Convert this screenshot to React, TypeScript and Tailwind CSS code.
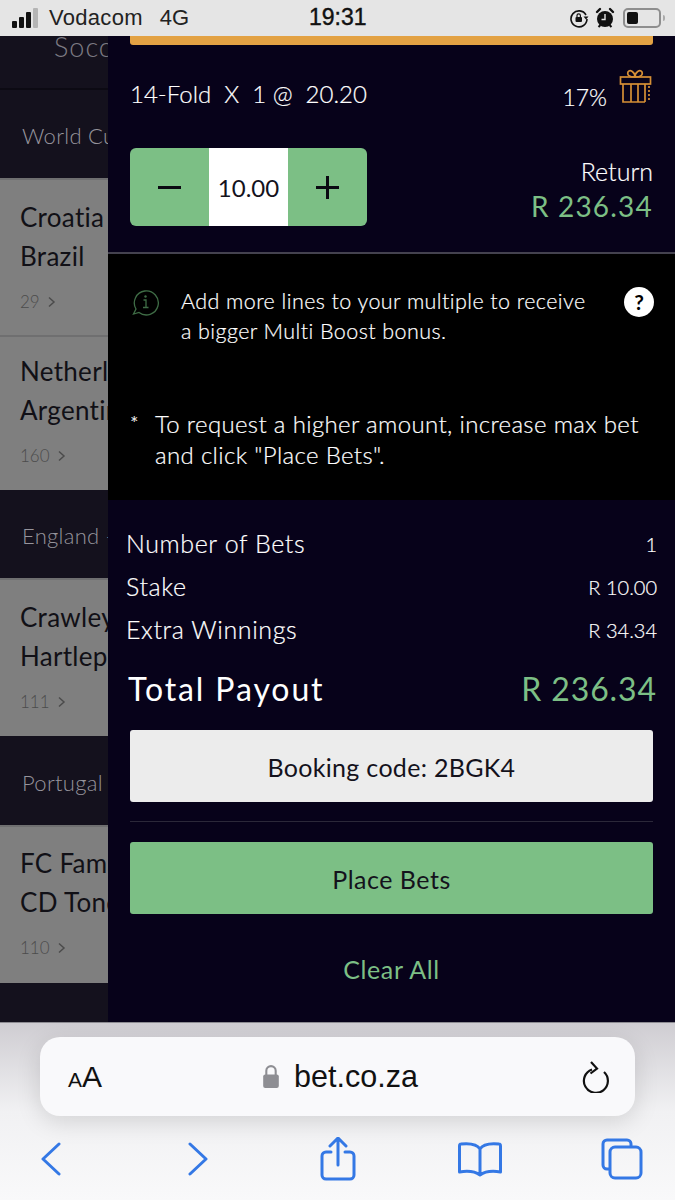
import React from "react";

const font = { fontFamily: '"Lato", "Noto Sans", sans-serif' };

function SignalBars() {
  return (
    <div className="flex items-end gap-[2px] h-[20px] w-[30px]">
      <div className="w-[5px] h-[7px] bg-[#111] rounded-[1px]"></div>
      <div className="w-[5px] h-[11px] bg-[#111] rounded-[1px]"></div>
      <div className="w-[5px] h-[16px] bg-[#111] rounded-[1px]"></div>
      <div className="w-[5px] h-[20px] bg-[#b5b5b5] rounded-[1px]"></div>
    </div>
  );
}

function StatusBar() {
  return (
    <div className="relative h-[36px] bg-[#e5e5e5] flex items-center pl-[12px] pr-[10px] shrink-0 font-['Liberation_Sans']">
      <SignalBars />
      <span className="ml-[7px] text-[22px] leading-[26px] text-[#222] tracking-[0.3px]">Vodacom</span>
      <span className="ml-[17px] text-[22px] leading-[26px] text-[#222]">4G</span>
      <span className="absolute left-[309px] top-[4px] text-[23px] leading-[26px] text-[#111] [-webkit-text-stroke:0.4px_#111]">19:31</span>
      <div className="ml-auto flex items-center">
        <svg width="20" height="20" viewBox="0 0 20 20" className="mr-[6px]">
          <path d="M17 7A8 8 0 1 0 18 11" fill="none" stroke="#111" strokeWidth="1.6" />
          <path d="M14.5 8.5h5l-2.5 3z" fill="#111" />
          <rect x="6.5" y="9" width="6.5" height="5" rx="1" fill="#111" />
          <path d="M8 9V7.5a1.7 1.7 0 0 1 3.4 0V9" fill="none" stroke="#111" strokeWidth="1.2" />
        </svg>
        <svg width="20" height="22" viewBox="0 0 20 22" className="mr-[8px]">
          <circle cx="10" cy="12" r="8" fill="#111" />
          <path d="M2 5l3-3M18 5l-3-3" stroke="#111" strokeWidth="2.4" strokeLinecap="round" />
          <path d="M3.5 20l2-2M16.5 20l-2-2" stroke="#111" strokeWidth="2" />
          <path d="M10 7v5.5H6.5" fill="none" stroke="#e5e5e5" strokeWidth="1.4" />
        </svg>
        <div className="w-[38px] h-[20px] rounded-[5px] border-2 border-[#8e8e8e] p-[2px] flex">
          <div className="w-[11px] h-full bg-[#111] rounded-[2px]"></div>
        </div>
        <div className="w-[2px] h-[6px] bg-[#aaa] ml-[2px] rounded-r-sm"></div>
      </div>
    </div>
  );
}

function SideHeader({ label, h }: { label: string; h: string }) {
  return (
    <div className={`${h} shrink-0 bg-[#14111d] flex items-center pl-[22px] pt-[3px] overflow-hidden`}>
      <span className="text-[22px] font-light text-[#96949c] whitespace-nowrap tracking-[0.3px]">{label}</span>
    </div>
  );
}

function SideMatch({ a, b, n, cls }: { a: string; b: string; n: string; cls: string }) {
  return (
    <div className={`${cls} shrink-0 bg-[#7f7f7f] pl-[20px] border-t-2 border-[#6f6f70] overflow-hidden`}>
      <div className="text-[26px] leading-[39px] text-[#111016] whitespace-nowrap tracking-[0.3px]">{a}</div>
      <div className="text-[26px] leading-[39px] text-[#111016] whitespace-nowrap tracking-[0.3px]">{b}</div>
      <div className="flex items-center mt-[14px] text-[17px] font-light leading-[24px] text-[#4c4c4c]">
        <span>{n}</span>
        <svg width="10" height="12" viewBox="0 0 10 12" className="ml-[7px]">
          <path d="M2 1.5L7 6l-5 4.5" fill="none" stroke="#4c4c4c" strokeWidth="1.5" />
        </svg>
      </div>
    </div>
  );
}

function Sidebar() {
  return (
    <div className="w-[108px] shrink-0 bg-[#14111d] overflow-hidden flex flex-col" style={font}>
      <div className="h-[54px] shrink-0 flex border-b-2 border-[#0c0a13] pl-[25px]">
        <div className="w-[4px] h-[35px] bg-[#8a6a38] rounded-b-sm"></div>
        <span className="ml-[29px] mt-[-3px] text-[27px] font-light leading-[28px] text-[#7d7b83] tracking-[1px]">Soccer</span>
      </div>
      <SideHeader label="World Cup" h="h-[88px]" />
      <SideMatch a="Croatia" b="Brazil" n="29" cls="h-[157px] pt-[18px]" />
      <SideMatch a="Netherlands" b="Argentina" n="160" cls="h-[155px] pt-[15px]" />
      <SideHeader label="England - League" h="h-[88px]" />
      <SideMatch a="Crawley" b="Hartlepool" n="111" cls="h-[158px] pt-[18px]" />
      <SideHeader label="Portugal" h="h-[89px]" />
      <SideMatch a="FC Famalicão" b="CD Tondela" n="110" cls="h-[158px] pt-[17px]" />
    </div>
  );
}

function GiftIcon() {
  return (
    <svg width="34" height="36" viewBox="0 0 34 36" fill="none" stroke="#d58f36" strokeWidth="1.7">
      <rect x="1.5" y="8" width="30" height="7" />
      <path d="M4 15v18h22M26 15v18" />
      <path d="M12 15v18M19 15v18" />
      <path d="M16 8c-6 0-8-2-7-5 2-3 7 0 7 5zM16 8c6 0 8-2 7-5-2-3-7 0-7 5z" />
      <path d="M30 17v14" strokeDasharray="2 2" />
    </svg>
  );
}

function InfoIcon() {
  return (
    <svg width="30" height="30" viewBox="0 0 30 30" fill="none" stroke="#3f6d46" strokeWidth="1.3">
      <path d="M6 22A12 12 0 1 1 9 25.4L3.5 27z" />
      <circle cx="15.5" cy="9.5" r="1.2" fill="#3f6d46" stroke="none" />
      <path d="M13.5 13h2.5v7M13 20.5h5.5" />
    </svg>
  );
}

function StakeRow() {
  return (
    <div className="flex justify-between">
      <div className="w-[237px] h-[78px] flex rounded-[6px] overflow-hidden bg-[#7cbf85]">
        <div className="w-[79px] flex items-center justify-center">
          <div className="w-[23px] h-[3px] bg-[#0b0a12]"></div>
        </div>
        <div className="w-[79px] bg-white flex items-center justify-center text-[24px] text-[#14121c] pt-[2px]">10.00</div>
        <div className="w-[79px] flex items-center justify-center relative">
          <div className="w-[23px] h-[3px] bg-[#0b0a12]"></div>
          <div className="absolute w-[3px] h-[23px] bg-[#0b0a12]"></div>
        </div>
      </div>
      <div className="text-right">
        <div className="text-[25px] font-light leading-[30px] text-white mt-[8px] [-webkit-text-stroke:0.2px_white]">Return</div>
        <div className="text-[28px] leading-[40px] text-[#7cbf85] tracking-[1.2px]">R 236.34</div>
      </div>
    </div>
  );
}

function SummaryRow({ label, value }: { label: string; value: string }) {
  return (
    <div className="flex items-center justify-between h-[43px]">
      <span className="text-[25px] font-light text-white tracking-[0.6px] [-webkit-text-stroke:0.2px_white]">{label}</span>
      <span className="text-[20px] font-light text-white [-webkit-text-stroke:0.2px_white]">{value}</span>
    </div>
  );
}

function Panel() {
  return (
    <div className="flex-1 min-w-0 bg-[#07021a] flex flex-col" style={font}>
      <div className="h-[218px] shrink-0 px-[22px] border-b-2 border-[#44424f]">
        <div className="h-[9px] bg-[#e3a244] rounded-b-[3px]"></div>
        <div className="flex items-center justify-between h-[103px] pb-[6px]">
          <span className="text-[24px] font-light text-white whitespace-pre [-webkit-text-stroke:0.2px_white]">14-Fold  X  1 @  20.20</span>
          <div className="flex items-center">
            <span className="text-[23px] font-light text-white mt-[8px] [-webkit-text-stroke:0.2px_white]">17%</span>
            <div className="ml-[12px] mb-[14px]"><GiftIcon /></div>
          </div>
        </div>
        <StakeRow />
      </div>

      <div className="h-[246px] shrink-0 bg-black pl-[22px] pr-[21px]">
        <div className="flex items-start pt-[32px]">
          <div className="mt-[1px] shrink-0"><InfoIcon /></div>
          <div className="ml-[21px] flex-1 text-[21.5px] font-light leading-[30px] text-white tracking-[0.42px] [-webkit-text-stroke:0.2px_white]">
            <div>Add more lines to your multiple to receive</div>
            <div>a bigger Multi Boost bonus.</div>
          </div>
          <div className="w-[30px] h-[30px] mt-[1px] rounded-full bg-white text-black flex items-center justify-center text-[21px] font-bold">?</div>
        </div>
        <div className="flex mt-[62px] text-[24px] font-light leading-[31px] text-white tracking-[0.35px] [-webkit-text-stroke:0.2px_white]">
          <span className="w-[25px] shrink-0 text-[20px]">*</span>
          <div>
            <div className="whitespace-nowrap">To request a higher amount, increase max bet</div>
            <div>and click "Place Bets".</div>
          </div>
        </div>
      </div>

      <div className="flex-1 pl-[18px] pr-[18px] pt-[22px]">
        <SummaryRow label="Number of Bets" value="1" />
        <SummaryRow label="Stake" value="R 10.00" />
        <SummaryRow label="Extra Winnings" value="R 34.34" />
        <div className="flex items-center justify-between h-[50px] mt-[13px] pl-[2px]">
          <span className="text-[32px] text-white tracking-[1.9px]">Total Payout</span>
          <span className="text-[32px] text-[#7cbf85] tracking-[0.9px]">R 236.34</span>
        </div>
        <div className="mx-[4px] mt-[16px]">
          <div className="h-[72px] bg-[#ececec] rounded-[3px] flex items-center justify-center pt-[4px] text-[25px] text-[#14121c] tracking-[0.3px]">Booking code: 2BGK4</div>
          <div className="h-px bg-[#2b2839] mt-[19px]"></div>
          <div className="h-[72px] bg-[#7cbf85] rounded-[3px] flex items-center justify-center pt-[4px] text-[25px] text-[#14121c] tracking-[0.5px] mt-[20px]">Place Bets</div>
          <div className="text-center text-[25px] text-[#7cbf85] tracking-[0.6px] mt-[37px]">Clear All</div>
        </div>
      </div>
    </div>
  );
}

function SafariBar() {
  return (
    <div className="h-[178px] shrink-0 bg-gradient-to-b from-[#cfcdd2] via-[#f1f1f3] to-[#f9f9fa] px-[40px] pt-[14px] relative font-['Liberation_Sans'] border-t border-[#8d8c92]">
      <div className="h-[79px] rounded-[20px] bg-[#f9f9fb] shadow-[0_6px_24px_rgba(0,0,0,0.13)] flex items-center pl-[28px] pr-[24px]">
        <span className="text-[#111] leading-none w-[75px] whitespace-nowrap"><span className="text-[21px]">A</span><span className="text-[30px]">A</span></span>
        <div className="flex-1 flex items-center justify-center gap-[14px] pr-[44px]">
          <svg width="18" height="25" viewBox="0 0 16 24">
            <path d="M3.5 11V6.5a4.5 4.5 0 0 1 9 0V11" fill="none" stroke="#8e8e93" strokeWidth="2" />
            <rect x="0.5" y="10" width="15" height="13" rx="2" fill="#8e8e93" />
          </svg>
          <span className="text-[30.5px] text-[#111]">bet.co.za</span>
        </div>
        <svg width="30" height="34" viewBox="0 0 30 34" fill="none" stroke="#111" strokeWidth="2.2" className="mt-[-2px]">
          <path d="M11 10.5A12 12 0 1 0 23 13" />
          <path d="M10 3l6 6.5-6.500 5" />
        </svg>
      </div>
      <div className="flex items-center mt-[21px] ml-[1px] mr-[-8px] text-[#3478e5]">
        <svg width="20" height="34" viewBox="0 0 20 34" fill="none" stroke="currentColor" strokeWidth="3" strokeLinecap="round" strokeLinejoin="round" className="shrink-0">
          <path d="M18 2L2 17l16 15" />
        </svg>
        <svg width="20" height="34" viewBox="0 0 20 34" fill="none" stroke="currentColor" strokeWidth="3" strokeLinecap="round" strokeLinejoin="round" className="shrink-0 ml-[127px]">
          <path d="M2 2l16 15L2 32" />
        </svg>
        <svg width="36" height="44" viewBox="0 0 36 44" fill="none" stroke="currentColor" strokeWidth="3" strokeLinecap="round" strokeLinejoin="round" className="shrink-0 ml-[112px]">
          <path d="M11 15H6a4 4 0 0 0-4 4v19a4 4 0 0 0 4 4h24a4 4 0 0 0 4-4V19a4 4 0 0 0-4-4h-5" />
          <path d="M18 28V2M10 9l8-8 8 8" />
        </svg>
        <svg width="44" height="36" viewBox="0 0 44 36" fill="none" stroke="currentColor" strokeWidth="3" strokeLinecap="round" strokeLinejoin="round" className="shrink-0 ml-[102px]">
          <path d="M22 8C19 3 13 2 3 3c-1 0-1.5 1-1.5 2v26c6-1 15-1 20.5 3 5.5-4 14.5-4 20.5-3V5c0-1-.5-2-1.500-2-10-1-16 0-19 5zM22 8v26" />
        </svg>
        <svg width="42" height="42" viewBox="0 0 42 42" fill="none" stroke="currentColor" strokeWidth="3" strokeLinejoin="round" className="shrink-0 ml-[99px]">
          <path d="M9 31H6a4 4 0 0 1-4-4V6a4 4 0 0 1 4-4h20a4 4 0 0 1 4 4v3" />
          <rect x="9" y="9" width="31" height="31" rx="5" />
        </svg>
      </div>
    </div>
  );
}

export default function App() {
  return (
    <div className="w-[675px] h-[1200px] flex flex-col overflow-hidden">
      <StatusBar />
      <div className="flex-1 min-h-0 flex overflow-hidden">
        <Sidebar />
        <Panel />
      </div>
      <SafariBar />
    </div>
  );
}
